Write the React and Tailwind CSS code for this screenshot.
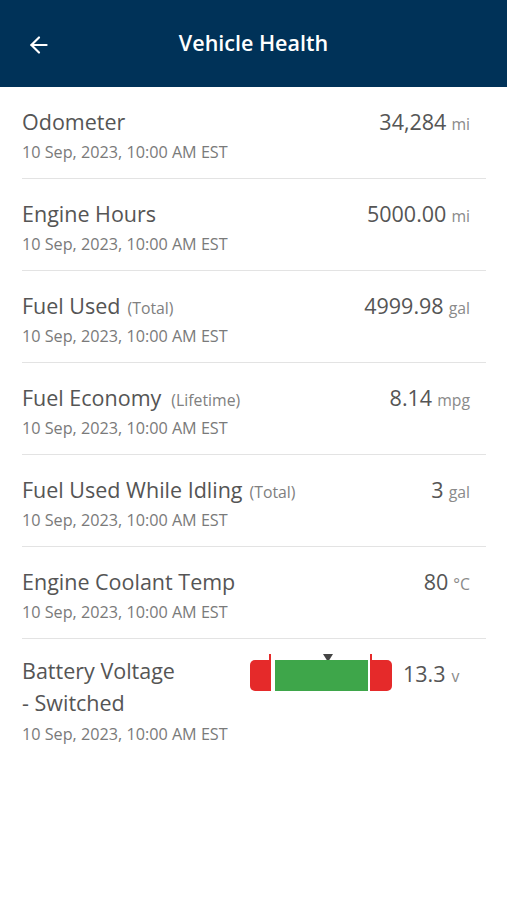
import React from "react";
import { ArrowLeft } from "lucide-react";

const DATE = "10 Sep, 2023, 10:00 AM EST";

const rows = [
  { title: "Odometer", value: "34,284", unit: "mi" },
  { title: "Engine Hours", value: "5000.00", unit: "mi" },
  { title: "Fuel Used", note: "(Total)", value: "4999.98", unit: "gal" },
  { title: "Fuel Economy", note: "(Lifetime)", gap: "ml-[10px]", value: "8.14", unit: "mpg" },
  { title: "Fuel Used While Idling", note: "(Total)", value: "3", unit: "gal" },
  { title: "Engine Coolant Temp", value: "80", unit: "°C" },
];

function Row({ title, note, gap, value, unit }) {
  return (
    <div className="ml-[22px] mr-[21px] border-b border-[#e3e3e3] pt-[21px] pb-[15px]">
      <div className="flex h-[28px] items-baseline justify-between">
        <div className="flex items-baseline">
          <span className="text-[21.5px] leading-[28px] text-[#555]">{title}</span>
          {note && <span className={`${gap || "ml-[7px]"} text-[15.8px] leading-none text-[#808080]`}>{note}</span>}
        </div>
        <div className="flex items-baseline pr-[16px]">
          <span className="text-[21.5px] leading-[28px] text-[#555]">{value}</span>
          <span className="ml-[5px] text-[15.8px] leading-none text-[#8a8a8a]">{unit}</span>
        </div>
      </div>
      <div className="mt-[5px] text-[16.2px] leading-[22px] text-[#7a7a7a]">{DATE}</div>
    </div>
  );
}

function Gauge() {
  return (
    <div className="relative h-[37px] w-[142px]">
      <div className="absolute left-[73px] top-0 h-0 w-0 border-l-[5px] border-r-[5px] border-t-[8px] border-l-transparent border-r-transparent border-t-[#444]" />
      <div className="absolute bottom-0 left-0 flex h-[31px] w-full items-stretch">
        <div className="relative h-full w-[21px] rounded-l-[5px] bg-[#e52a2a]">
          <div className="absolute right-0 top-[-6px] h-[6px] w-[2px] bg-[#e52a2a]" />
        </div>
        <div className="ml-[4px] h-full w-[93px] bg-[#3ea64a]" />
        <div className="relative ml-[2px] h-full w-[22px] rounded-r-[5px] bg-[#e52a2a]">
          <div className="absolute left-0 top-[-6px] h-[6px] w-[2px] bg-[#e52a2a]" />
        </div>
      </div>
    </div>
  );
}

export default function App() {
  return (
    <div className="min-h-[900px] bg-white" style={{ fontFamily: '"Open Sans", "Noto Sans", sans-serif' }}>
      <div className="relative flex h-[87px] items-center justify-center bg-[#003258]">
        <ArrowLeft className="absolute left-[26px] top-[32px] text-white" size={26} strokeWidth={2} />
        <span className="text-[21.5px] font-semibold text-white">Vehicle Health</span>
      </div>
      {rows.map((r) => (
        <Row key={r.title} {...r} />
      ))}
      <div className="ml-[22px] mr-[21px] pt-[16px]">
        <div className="flex items-start">
          <div className="w-[210px] text-[21.5px] leading-[32px] text-[#555]">
            Battery Voltage
            <br />- Switched
          </div>
          <div className="ml-[18px] mt-[-1px]">
            <Gauge />
          </div>
          <div className="ml-[11px] mt-[5px] flex h-[28px] items-baseline">
            <span className="text-[21.5px] leading-[28px] text-[#555]">13.3</span>
            <span className="ml-[6px] text-[15.8px] leading-none text-[#8a8a8a]">v</span>
          </div>
        </div>
        <div className="mt-[4px] text-[16.2px] leading-[22px] text-[#7a7a7a]">{DATE}</div>
      </div>
    </div>
  );
}
